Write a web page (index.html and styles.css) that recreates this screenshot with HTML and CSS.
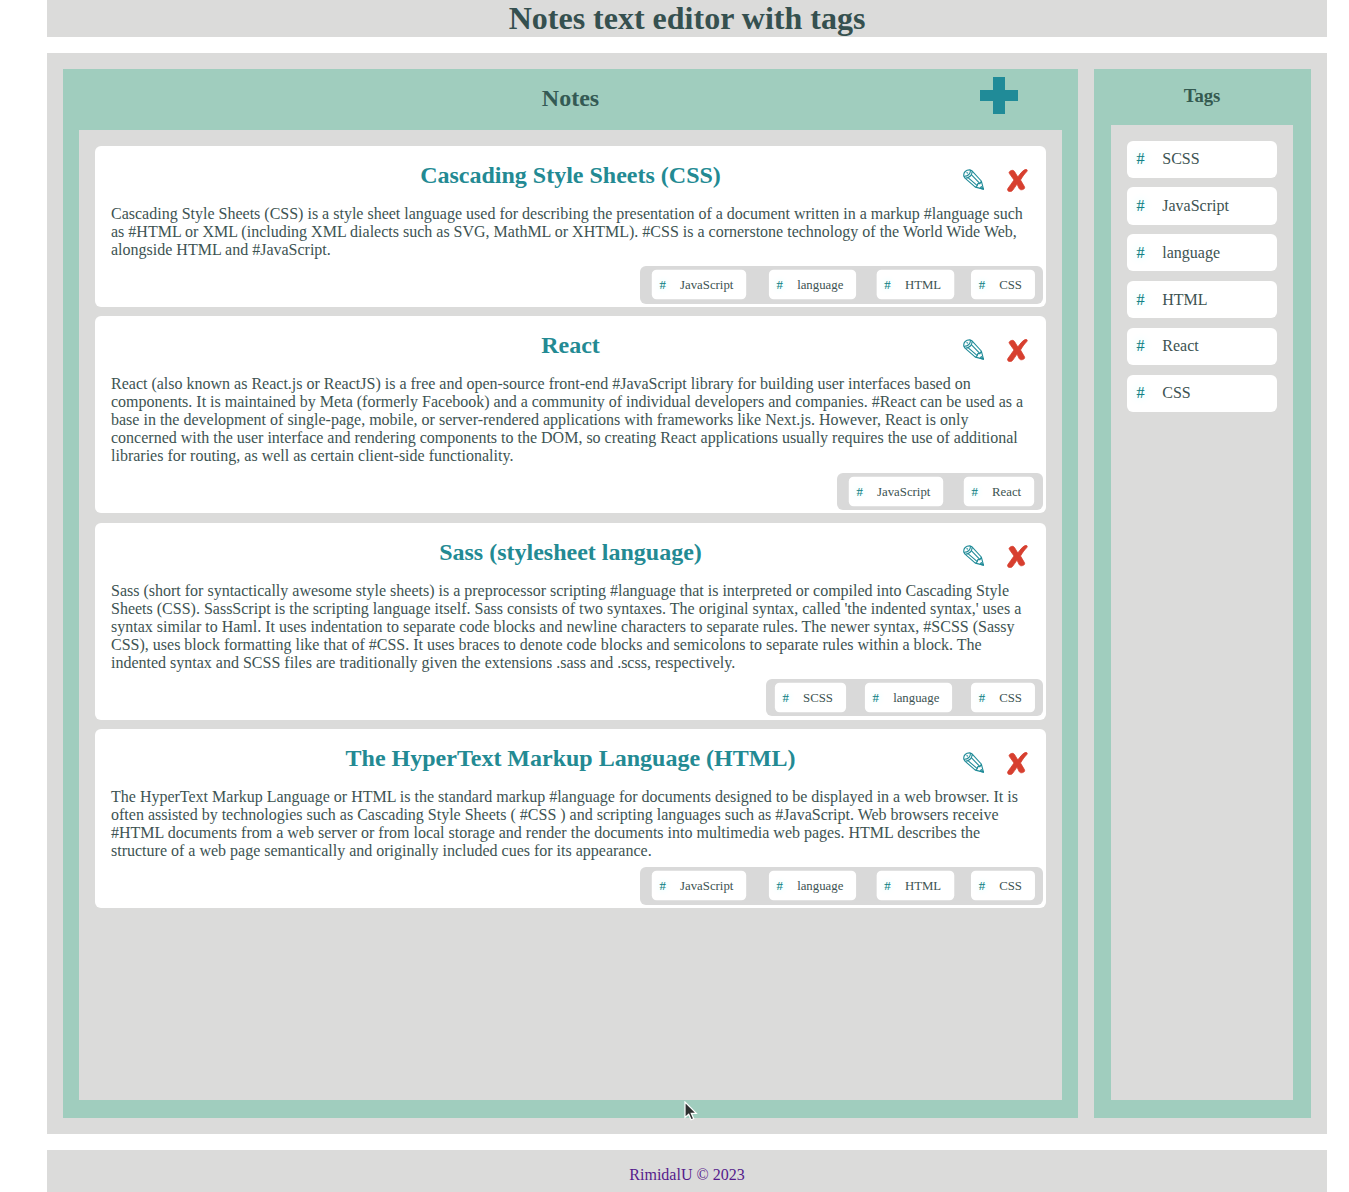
FILE: index.html
```html
<!DOCTYPE html>
<html lang="en">
<head>
<meta charset="utf-8">
<title>Notes text editor with tags</title>
<link rel="stylesheet" href="styles.css">
</head>
<body>
<svg width="0" height="0" class="sprite">
  <symbol id="pencil" viewBox="0 0 22 21"><path d="M.8 7.2C.2 3.4 3 .6 7.2.9L9 1.8 18.3 12l2.2 8.1-8.2-2L2 9.200zM7.200 .9C8 4.500 5 7.500 .8 7.200M9 1.800C9.500 6 6.500 9 2 9.200M5 8.700l9.300 8M8.300 5.700l8.700 9M12.300 18.100l2-1.400 .5-2.200 2.200.2 1.300-2.700M3.500 3.500l1.500.8"/><path class="tip" d="M18.300 17.500l2.200 2.600-3.300-.8z"/></symbol>
  <symbol id="cross" viewBox="0 0 21 23"><path d="M2.400 2.800C4.500.8 6.600.8 7.800 3l3 5C13 5 15.200 2 18 .6c.8-.5 1.500-.4 2 .2.5.8.1 1.500-.6 2.200-2.500 2.500-4.200 5.200-5.900 8l3.900 6.600c.7 1.300-.1 2.600-1.800 3-1.800.5-2.900.1-3.700-1.500L10 15c-1.500 2.300-2.900 4.500-4.500 6.500-.8 1.100-2.400 1.400-4 .7-1-.7-1.300-1.600-.6-2.700C2.700 17 4.700 14.200 7 11L2.600 4.800c-.5-.7-.7-1.500-.2-2z"/></symbol>
</svg>
<div class="app">
  <header class="header"><h1>Notes text editor with tags</h1></header>
  <main class="main">
    <section class="panel notes">
      <div class="panel-head">
        <h2>Notes</h2>
        <button class="add" aria-label="Add note"><svg width="38" height="37" viewBox="0 0 38 37"><path d="M13 0h12v13h13v11H25v13H13V24H0V13h13z"/></svg></button>
      </div>
      <div class="well note-list">
        <article class="note">
          <div class="note-head"><h2>Cascading Style Sheets (CSS)</h2><div class="actions"><button class="edit" aria-label="Edit"><svg width="22" height="21"><use href="#pencil"/></svg></button><button class="remove" aria-label="Delete"><svg width="21" height="23"><use href="#cross"/></svg></button></div></div>
          <p>Cascading Style Sheets (CSS) is a style sheet language used for describing the presentation of a document written in a markup #language such as #HTML or XML (including XML dialects such as SVG, MathML or XHTML). #CSS is a cornerstone technology of the World Wide Web, alongside HTML and #JavaScript.</p>
          <ul class="note-tags"><li class="tag"><span>#</span>JavaScript</li><li class="tag"><span>#</span>language</li><li class="tag"><span>#</span>HTML</li><li class="tag"><span>#</span>CSS</li></ul>
        </article>
        <article class="note">
          <div class="note-head"><h2>React</h2><div class="actions"><button class="edit" aria-label="Edit"><svg width="22" height="21"><use href="#pencil"/></svg></button><button class="remove" aria-label="Delete"><svg width="21" height="23"><use href="#cross"/></svg></button></div></div>
          <p>React (also known as React.js or ReactJS) is a free and open-source front-end #JavaScript library for building user interfaces based on components. It is maintained by Meta (formerly Facebook) and a community of individual developers and companies. #React can be used as a base in the development of single-page, mobile, or server-rendered applications with frameworks like Next.js. However, React is only concerned with the user interface and rendering components to the DOM, so creating React applications usually requires the use of additional libraries for routing, as well as certain client-side functionality.</p>
          <ul class="note-tags"><li class="tag"><span>#</span>JavaScript</li><li class="tag"><span>#</span>React</li></ul>
        </article>
        <article class="note">
          <div class="note-head"><h2>Sass (stylesheet language)</h2><div class="actions"><button class="edit" aria-label="Edit"><svg width="22" height="21"><use href="#pencil"/></svg></button><button class="remove" aria-label="Delete"><svg width="21" height="23"><use href="#cross"/></svg></button></div></div>
          <p>Sass (short for syntactically awesome style sheets) is a preprocessor scripting #language that is interpreted or compiled into Cascading Style Sheets (CSS). SassScript is the scripting language itself. Sass consists of two syntaxes. The original syntax, called 'the indented syntax,' uses a syntax similar to Haml. It uses indentation to separate code blocks and newline characters to separate rules. The newer syntax, #SCSS (Sassy CSS), uses block formatting like that of #CSS. It uses braces to denote code blocks and semicolons to separate rules within a block. The indented syntax and SCSS files are traditionally given the extensions .sass and .scss, respectively.</p>
          <ul class="note-tags"><li class="tag"><span>#</span>SCSS</li><li class="tag"><span>#</span>language</li><li class="tag"><span>#</span>CSS</li></ul>
        </article>
        <article class="note">
          <div class="note-head"><h2>The HyperText Markup Language (HTML)</h2><div class="actions"><button class="edit" aria-label="Edit"><svg width="22" height="21"><use href="#pencil"/></svg></button><button class="remove" aria-label="Delete"><svg width="21" height="23"><use href="#cross"/></svg></button></div></div>
          <p>The HyperText Markup Language or HTML is the standard markup #language for documents designed to be displayed in a web browser. It is often assisted by technologies such as Cascading Style Sheets ( #CSS ) and scripting languages such as #JavaScript. Web browsers receive #HTML documents from a web server or from local storage and render the documents into multimedia web pages. HTML describes the structure of a web page semantically and originally included cues for its appearance.</p>
          <ul class="note-tags"><li class="tag"><span>#</span>JavaScript</li><li class="tag"><span>#</span>language</li><li class="tag"><span>#</span>HTML</li><li class="tag"><span>#</span>CSS</li></ul>
        </article>
      </div>
    </section>
    <aside class="panel tags">
      <h3>Tags</h3>
      <ul class="well tag-list"><li class="tag"><span>#</span>SCSS</li><li class="tag"><span>#</span>JavaScript</li><li class="tag"><span>#</span>language</li><li class="tag"><span>#</span>HTML</li><li class="tag"><span>#</span>React</li><li class="tag"><span>#</span>CSS</li></ul>
    </aside>
  </main>
  <footer class="footer"><a>RimidalU © 2023</a></footer>
</div>
<svg class="cursor" width="14" height="21" viewBox="0 0 14 21"><path d="M1 1v15.500l3.700-3.300 2.400 5.600 2.600-1.100-2.400-5.400h5z"/></svg>
</body>
</html>
```
FILE: styles.css
```css
* { box-sizing: border-box; margin: 0; padding: 0; }
body {
  height: 1192px;
  overflow: hidden;
  background: #fff;
  color: #3d5352;
  font: 16px/18px "Liberation Serif", "Times New Roman", serif;
}
ul { list-style: none; }
button { border: 0; background: none; }
button svg { display: block; overflow: visible; }
.sprite { display: none; }
.app {
  display: flex;
  flex-direction: column;
  gap: 16px;
  width: 1280px;
  height: 1192px;
  margin-left: 47px;
}
.header, .main, .footer, .well { background: #dbdbda; }
.header { height: 37px; text-align: center; }
h1 { font-size: 32px; line-height: 37px; color: #35504f; }
h2 { font-size: 24px; line-height: 27px; }
h3 { font-size: 18.72px; line-height: 21px; text-align: center; color: #345a50; }
.main {
  display: grid;
  grid-template-columns: 1015px 217px;
  gap: 16px;
  height: 1081px;
  padding: 16px;
}
.panel {
  display: flex;
  flex-direction: column;
  padding: 16px 16px 18px;
  background: #a0cdbe;
}
.panel-head {
  display: grid;
  grid-template-columns: 1fr auto 1fr;
  height: 45px;
}
.panel-head h2 { grid-column: 2; color: #345a54; }
.add { justify-self: end; height: 37px; margin: -8px 44px 0 0; }
.add svg { fill: #208b98; }
.well { flex: 1; padding: 16px; }
.note-list { display: flex; flex-direction: column; gap: 9.6px; }
.note {
  display: flex;
  flex-direction: column;
  padding: 16px 16px 3.25px;
  border-radius: 6px;
  background: #fff;
}
.note-head {
  display: grid;
  grid-template-columns: 1fr auto 1fr;
  height: 43px;
}
.note-head h2 { grid-column: 2; color: #238a93; }
.actions {
  display: flex;
  justify-content: flex-end;
  align-items: flex-start;
  gap: 22px;
  padding: 6.5px 2.5px 0 0;
}
.edit {
  fill: none;
  stroke: #208b98;
  stroke-width: 1.1;
  stroke-linejoin: round;
}
.edit .tip { fill: #208b98; }
.remove { fill: #d73f2f; stroke: #d73f2f; stroke-width: 0.8; }
.note-tags {
  display: flex;
  align-self: flex-end;
  margin: 7.35px -13px 0 0;
  border-radius: 6px;
  background: #d9d9d9;
}
.tag {
  display: flex;
  padding: 9.6px 16px 9.6px 9.6px;
  border-radius: 6px;
  background: #fff;
}
.tag span {
  width: 8px;
  margin-right: 17.7px;
  color: #138285;
  -webkit-text-stroke: 0.1px #138285;
  text-shadow: 0 0 8px #bff;
}
.note-tags .tag { transform: scale(0.8); }
.tags h3 { margin-bottom: 19px; }
.tags { padding-left: 17px; padding-right: 18px; }
.tag-list {
  display: flex;
  flex-direction: column;
  gap: 9.6px;
  padding-top: 15.6px;
}
.footer { flex: 1; padding-top: 16px; text-align: center; }
.footer a { color: #551a8b; }
.cursor {
  position: absolute;
  left: 684px;
  top: 1101px;
  fill: #2d3030;
  stroke: #fff;
  stroke-width: 1.2;
}
```
